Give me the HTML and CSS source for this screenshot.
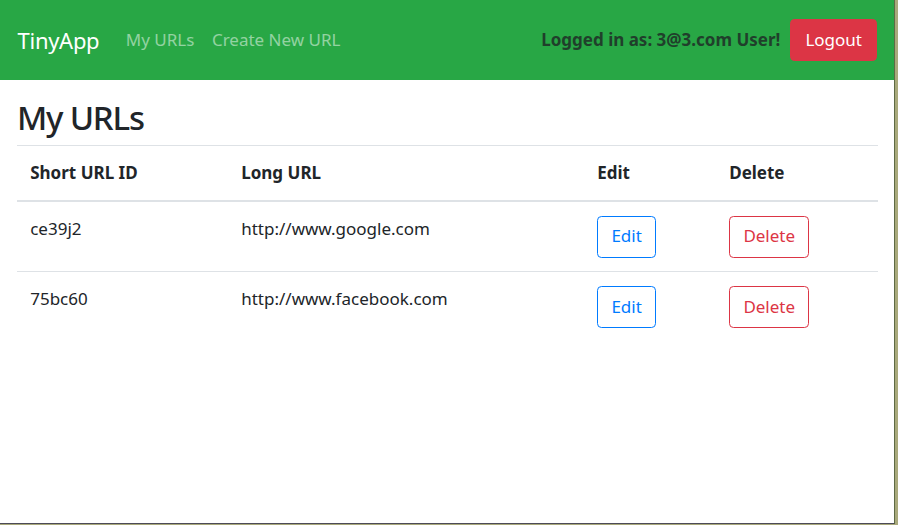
FILE: index.html
```html
<!DOCTYPE html>
<html lang="en">
<head>
<meta charset="utf-8">
<title>TinyApp</title>
<link rel="stylesheet" href="styles.css">
</head>
<body>
<div class="window">
  <nav class="navbar">
    <a class="brand" href="#">TinyApp</a>
    <div class="nav-links">
      <a class="nav-link" href="#">My URLs</a>
      <a class="nav-link" href="#">Create New URL</a>
    </div>
    <div class="nav-right">
      <span class="login-text">Logged in as: 3@3.com User!</span>
      <button class="btn btn-danger">Logout</button>
    </div>
  </nav>
  <main class="container">
    <h2 class="title">My URLs</h2>
    <table class="table">
      <colgroup>
        <col class="c1"><col class="c2"><col class="c3"><col class="c4">
      </colgroup>
      <thead>
        <tr><th>Short URL ID</th><th>Long URL</th><th>Edit</th><th>Delete</th></tr>
      </thead>
      <tbody>
        <tr>
          <td>ce39j2</td>
          <td>http://www.google.com</td>
          <td><button class="btn btn-outline-primary">Edit</button></td>
          <td><button class="btn btn-outline-danger">Delete</button></td>
        </tr>
        <tr>
          <td>75bc60</td>
          <td>http://www.facebook.com</td>
          <td><button class="btn btn-outline-primary">Edit</button></td>
          <td><button class="btn btn-outline-danger">Delete</button></td>
        </tr>
      </tbody>
    </table>
  </main>
</div>
</body>
</html>
```
FILE: styles.css
```css
html {
  background: #a9a97c;
}
body {
  margin: 0;
  font-family: "Noto Sans", "Open Sans", sans-serif;
  font-size: 17px;
  line-height: 26.4px;
  color: #212529;
}
.window {
  width: 895px;
  height: 524px;
  background: #ffffff;
  border-right: 1px solid #5e6a44;
  border-bottom: 1px solid #4d4b58;
  box-sizing: border-box;
  overflow: hidden;
}
.navbar {
  height: 80px;
  background: #28a745;
  display: flex;
  align-items: center;
  padding: 0 17px 0 17.6px;
}
.brand {
  font-size: 22px;
  letter-spacing: -0.3px;
  color: #ffffff;
  text-decoration: none;
  margin-right: 17.6px;
  line-height: 33px;
}
.nav-links {
  display: flex;
}
.nav-link {
  color: rgba(255, 255, 255, 0.5);
  text-decoration: none;
  padding: 8.8px;
}
.nav-right {
  margin-left: auto;
  display: flex;
  align-items: center;
}
.login-text {
  font-weight: 700;
  color: #203f2b;
  margin-right: 10px;
}
.btn {
  font-family: inherit;
  font-size: 17px;
  line-height: 26.4px;
  padding: 6.8px 13.2px;
  border-radius: 4.4px;
  border: 1px solid transparent;
  background: transparent;
  cursor: pointer;
}
.btn-danger {
  background: #dc3545;
  border-color: #dc3545;
  color: #ffffff;
  padding: 6.8px 14px;
}
.btn-outline-primary {
  color: #007bff;
  border-color: #007bff;
}
.btn-outline-danger {
  color: #dc3545;
  border-color: #dc3545;
}
.container {
  padding: 0 17px;
}
.title {
  font-size: 33px;
  letter-spacing: -1.2px;
  font-weight: 500;
  line-height: 42px;
  margin: 17px 0 6px;
}
.table {
  width: 100%;
  border-collapse: collapse;
  table-layout: fixed;
}
.c1 { width: 211px; }
.c2 { width: 356px; }
.c3 { width: 132px; }
.c4 { width: 162px; }
.table th,
.table td {
  padding: 13.8px 13.2px 13.7px;
  text-align: left;
  vertical-align: top;
  border-top: 1px solid #dee2e6;
}
.table th {
  font-weight: 700;
}
.table thead th {
  border-bottom: 2px solid #dee2e6;
}
```
